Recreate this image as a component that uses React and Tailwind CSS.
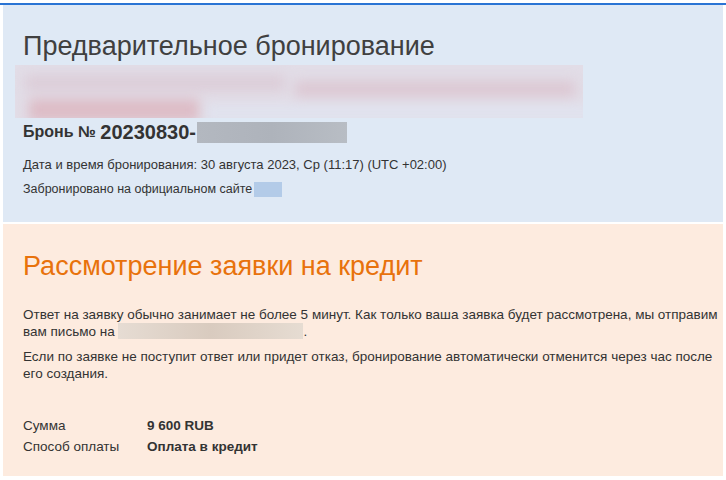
import React from 'react';

const font = { fontFamily: '"Liberation Sans", Arial, sans-serif' };

const Redacted = ({ className }) => (
    <span className={`inline-block align-middle ${className}`} />
);

const BookingHeader = () => {
    return (
        <div className="bg-[#dfe9f5] pl-5 pt-[25px] pb-[20px]">
            <h1 className="text-[27px] leading-[32px] text-[#404040] font-normal">
                Предварительное бронирование
            </h1>

            {/* hidden hotel name and address */}
            <div className="-ml-2 mt-[3px] w-[568px] h-[53px] overflow-hidden bg-[#e2dde7]">
                <div className="relative w-full h-full blur-[6px]">
                    <div className="absolute left-[10px] top-[10px] w-[260px] h-[16px] bg-[#dccdd8]" />
                    <div className="absolute left-[280px] top-[16px] w-[280px] h-[16px] bg-[#dcc8d3]" />
                    <div className="absolute left-[14px] top-[34px] w-[170px] h-[22px] bg-[#ddbcc6]" />
                    <div className="absolute left-[190px] top-[40px] w-[390px] h-[16px] bg-[#e0e3ef]" />
                </div>
            </div>

            <div className="mt-[2px] h-[24px] flex items-center text-[#333]">
                <span className="text-[16px] font-bold">Бронь №&nbsp;</span>
                <span className="text-[20px] font-bold leading-[24px]">20230830-</span>
                <Redacted className="ml-[1px] w-[150px] h-[21px] bg-gradient-to-r from-[#b3b8c0] via-[#aeb3bb] to-[#b8bdc4]" />
            </div>

            <div className="mt-[8px] text-[13px] leading-[25px] text-[#333]">
                <p>Дата и время бронирования: 30 августа 2023, Ср (11:17) (UTC +02:00)</p>
                <p className="flex items-center text-[12.5px]">
                    Забронировано на официальном сайте
                    <Redacted className="ml-[2px] w-[28px] h-[15px] bg-[#b3cbe8]" />
                </p>
            </div>
        </div>
    );
};

const CreditReview = () => {
    return (
        <div className="mt-[2px] bg-[#fdebdf] pl-5 pt-[26px] pb-[19px] text-[#333]">
            <h2 className="text-[27px] leading-[32px] text-[#e8720c] font-normal">
                Рассмотрение заявки на кредит
            </h2>

            <div className="mt-[24px] text-[13.5px] leading-[17px]">
                <p>
                    Ответ на заявку обычно занимает не более 5 минут. Как только ваша заявка будет рассмотрена, мы отправим вам письмо на{' '}
                    <Redacted className="w-[185px] h-[16px] -mt-[2px] bg-gradient-to-r from-[#e6dcd3] via-[#d9cbbf] to-[#e6dcd2]" />.
                </p>
                <p className="mt-[8px]">
                    Если по заявке не поступит ответ или придет отказ, бронирование автоматически отменится через час после его создания.
                </p>
            </div>

            <div className="mt-[33px] text-[13.5px] leading-[21px]">
                <div className="flex">
                    <span className="w-[124px]">Сумма</span>
                    <span className="font-bold">9 600 RUB</span>
                </div>
                <div className="flex">
                    <span className="w-[124px]">Способ оплаты</span>
                    <span className="font-bold">Оплата в кредит</span>
                </div>
            </div>
        </div>
    );
};

export default function App() {
    return (
        <div className="min-h-[480px] bg-white pt-[3px]" style={font}>
            <div className="h-[2px] bg-[#2a74d4]" />
            <div className="px-[3px]">
                <BookingHeader />
                <CreditReview />
            </div>
        </div>
    );
}
